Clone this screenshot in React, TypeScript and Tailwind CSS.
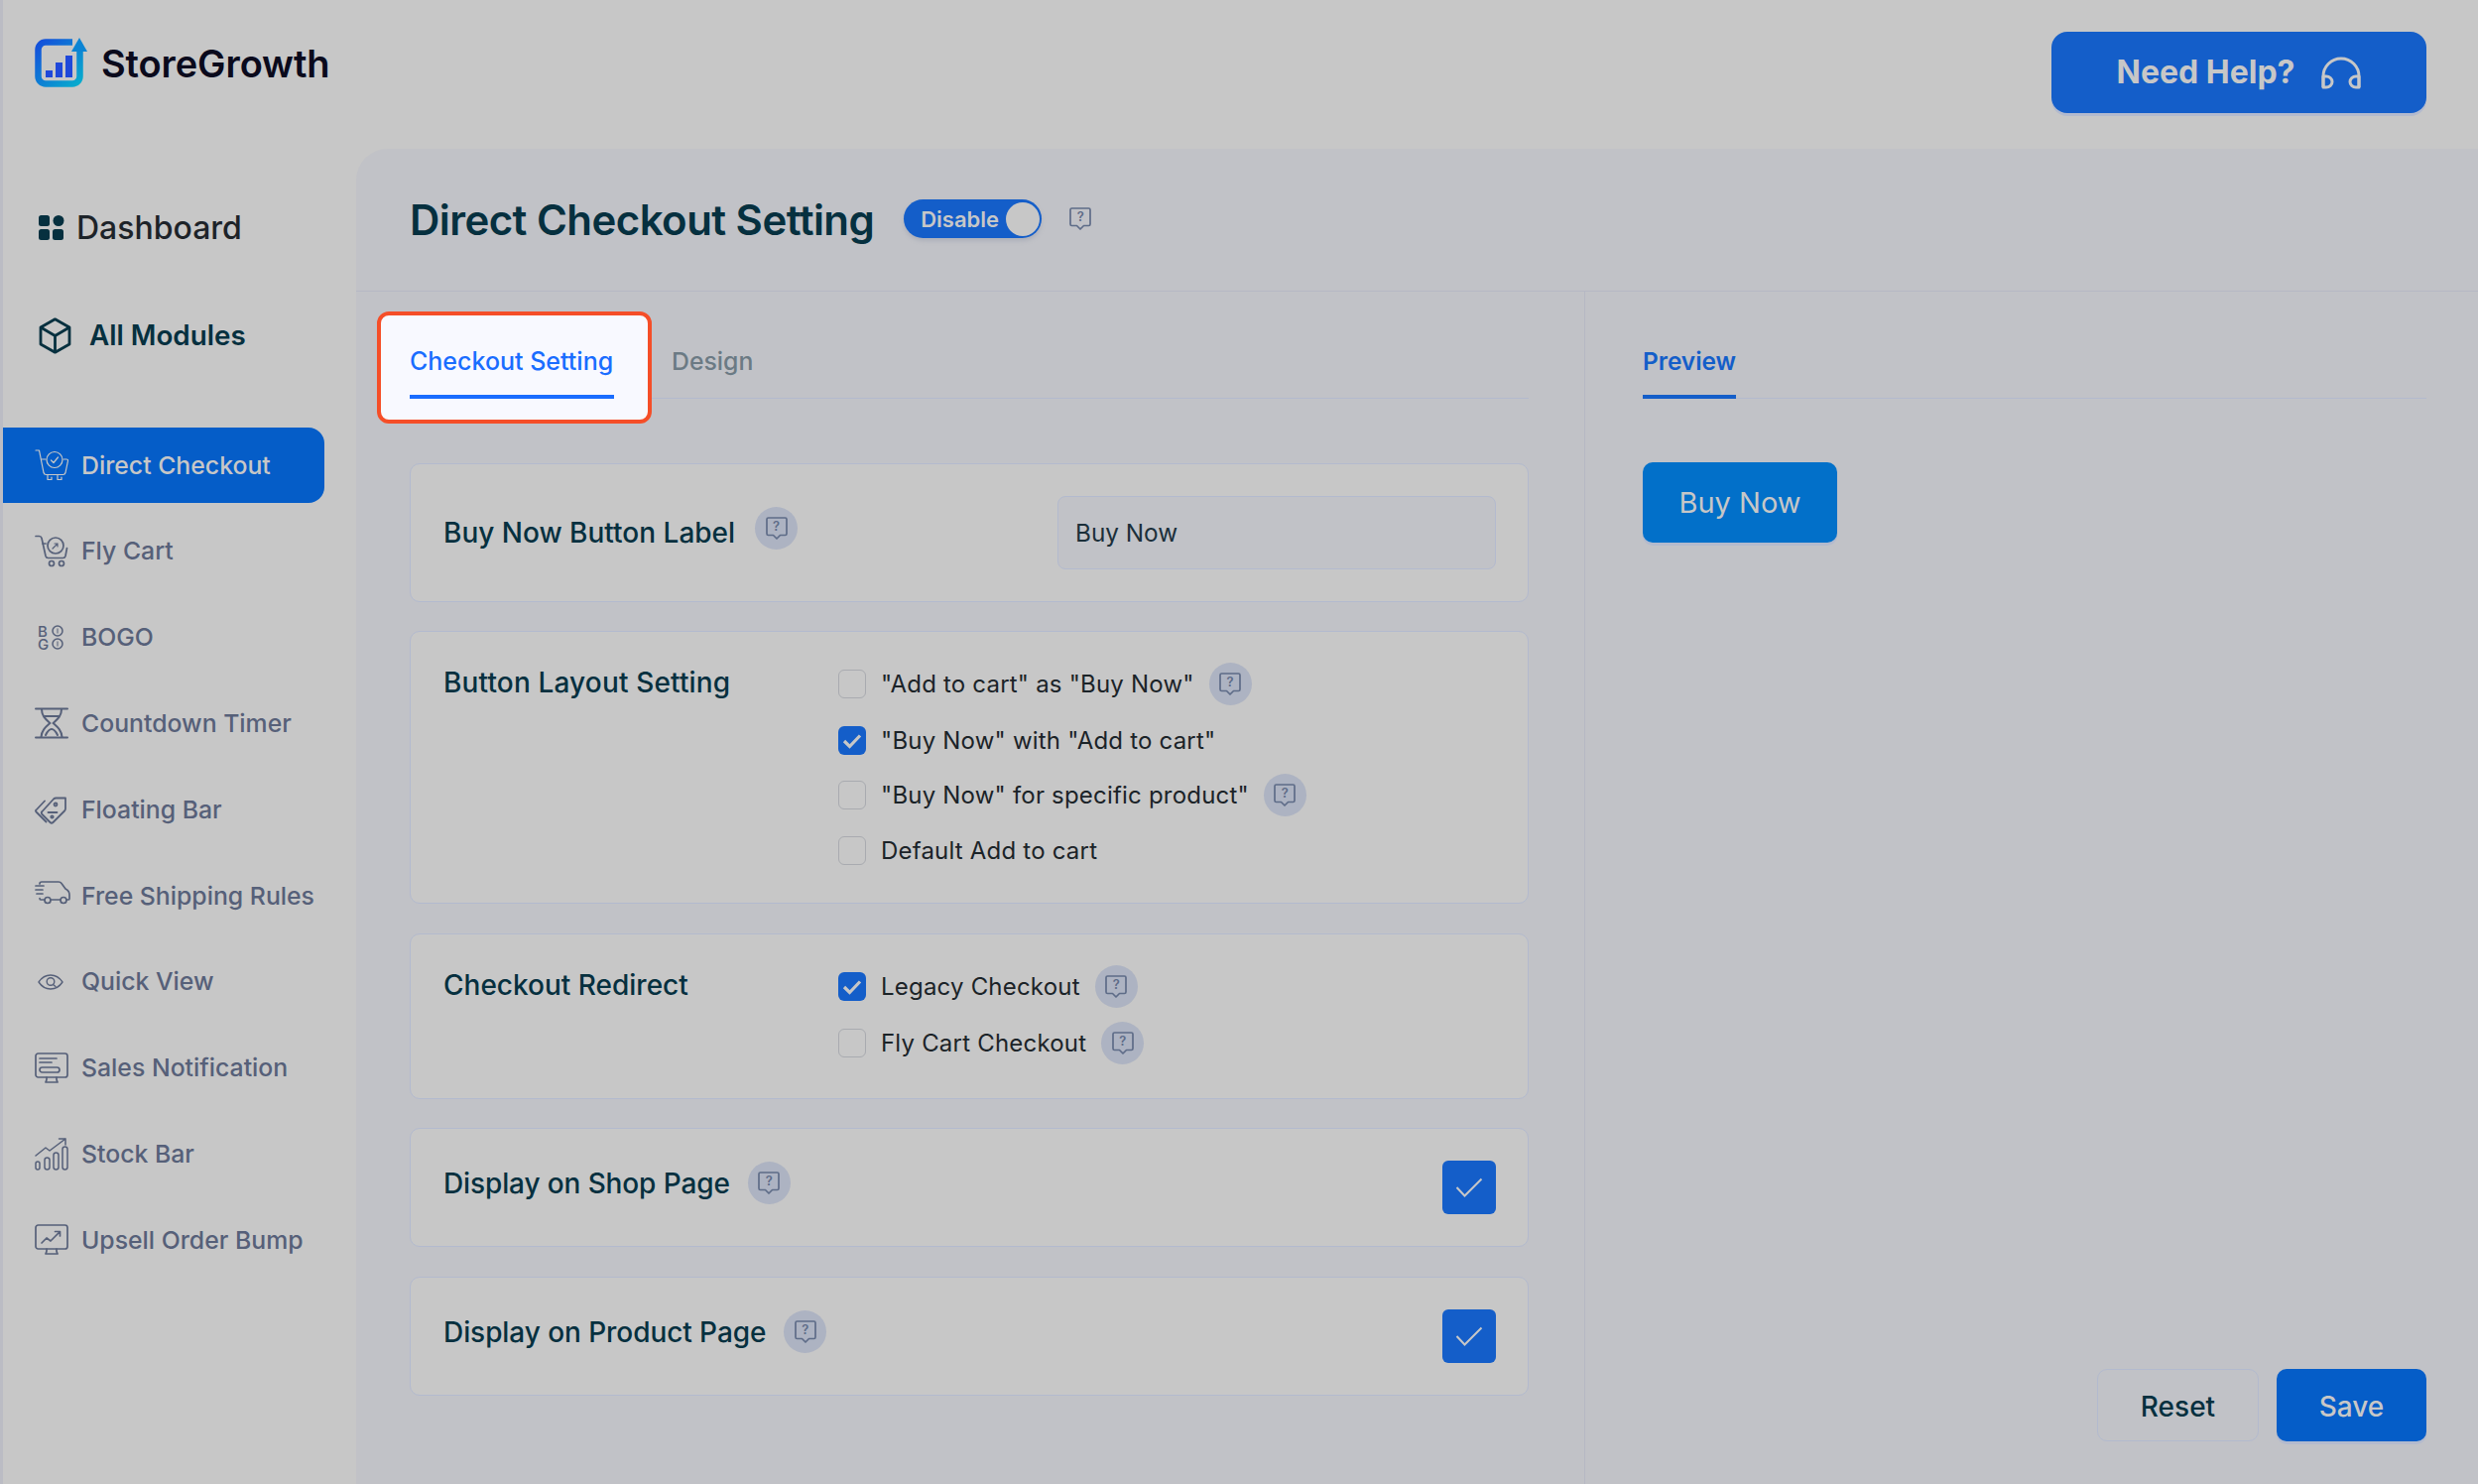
import React from 'react';

const Logo = () => (
  <svg width="53" height="51" viewBox="0 0 53 51" fill="none">
    <defs>
      <linearGradient id="logoGrad" x1="0" y1="0" x2="50" y2="51" gradientUnits="userSpaceOnUse">
        <stop offset="0" stopColor="#1546dc" />
        <stop offset="1" stopColor="#06b6cc" />
      </linearGradient>
    </defs>
    <path d="M38 4.5H11a7.5 7.5 0 0 0-7.5 7.5v27a7.5 7.5 0 0 0 7.5 7.5h27a7.5 7.5 0 0 0 7.5-7.5V12" stroke="url(#logoGrad)" strokeWidth="6.5" />
    <path d="M45 0l8 14H37z" fill="#0b84d4" />
    <rect x="11" y="33" width="7" height="7" fill="#1f48da" />
    <rect x="21" y="25" width="7" height="15" fill="#1f48da" />
    <rect x="31" y="18" width="7" height="22" fill="#1f48da" />
  </svg>
);

const DashboardIcon = () => (
  <svg width="26" height="26" viewBox="0 0 26 26" fill="#06303f">
    <rect x="0" y="0" width="11" height="11" rx="2.5" />
    <circle cx="20" cy="5.5" r="5.5" />
    <rect x="0" y="14" width="11" height="11" rx="2.5" />
    <rect x="14" y="14" width="11" height="11" rx="2.5" />
  </svg>
);

const CubeIcon = () => (
  <svg width="33" height="37" viewBox="0 0 33 37" fill="none" stroke="#06303f" strokeWidth="2.8" strokeLinejoin="round">
    <path d="M16.5 1.8L31 10v17l-14.5 8.2L2 27V10z" />
    <path d="M2 10l14.5 8.5L31 10M16.5 18.5v16.5" />
  </svg>
);

const Svg = ({ children, w = 34, h = 34, sw = 1.6 }: { children: React.ReactNode; w?: number; h?: number; sw?: number }) => (
  <svg width={w} height={h} viewBox={`0 0 ${w} ${h}`} fill="none" stroke="currentColor" strokeWidth={sw} strokeLinecap="round" strokeLinejoin="round">
    {children}
  </svg>
);

const DirectCheckoutIcon = () => (
  <Svg h={32} sw={1.2}>
    <path d="M1 1h3.5l4.5 22.500q.5 2 2.5 2h17q2 0 2.500-2l2.500-12q.3-1.500-1.500-1.500h-3" />
    <path d="M6.500 10h4.500" />
    <circle cx="20" cy="10.5" r="8" />
    <path d="M16.500 11l2.500 2.500 4.500-5.500" />
    <path d="M13 26v4.500h4V28M23 26v4.500h4V28" />
  </Svg>
);

const FlyCartIcon = () => (
  <Svg h={33} sw={1.7}>
    <path d="M1 1.500h3.500q2 0 2.500 2l4 18q.5 2 2.500 2h15q2 0 2.500-2l1.500-8" />
    <path d="M8 9h3" />
    <circle cx="21" cy="11" r="8" />
    <path d="M18 14l5-5M20 9h3v3" strokeWidth="1.2" />
    <circle cx="17" cy="29" r="2.5" />
    <circle cx="27" cy="29" r="2.5" />
  </Svg>
);

const BogoCircle = () => (
  <svg width="12" height="12" viewBox="0 0 12 12" fill="none" stroke="currentColor" strokeWidth="1.5">
    <circle cx="6" cy="6" r="5" />
    <path d="M6 3.500v5" strokeWidth="1" />
  </svg>
);

const BogoIcon = () => (
  <span className="ml-[3px] grid h-[26px] w-[26px] grid-cols-[14px_12px] grid-rows-[13px_13px] items-center text-[15px] font-medium leading-[13px]">
    <span>B</span>
    <BogoCircle />
    <span>G</span>
    <BogoCircle />
  </span>
);

const TimerIcon = () => (
  <Svg h={32} sw={2}>
    <path d="M1 1.500h32M1 30.500h32" />
    <path d="M7 2c0 7 4 10 8.500 14C11 20 7 23 6.500 30M27 2c0 7-4 10-8.500 14C23 20 27 23 27.500 30" />
    <path d="M10 9h14M11 28c2-4 4-6 6-6s4 2 6 6" />
  </Svg>
);

const FloatingIcon = () => (
  <Svg w={33} h={29} sw={1.8}>
    <path d="M31 2.500v10.500q0 1.500-1 2.500L18.500 27q-1.500 1.500-3 0l-8-8q-1.500-1.500 0-3L19 3.500q1-1 2.500-1z" />
    <path d="M10 5.500L1.500 14.500q-1 1 0 2l10 10" />
    <circle cx="21" cy="9" r="1.5" />
    <path d="M13.500 17h9" />
    <circle cx="17.5" cy="21.5" r="1.2" />
  </Svg>
);

const TruckIcon = () => (
  <svg width="36" height="24" viewBox="0 0 36 24" fill="none" stroke="currentColor" strokeWidth="1.7" strokeLinecap="round" strokeLinejoin="round" className="-mt-[6px]">
    <path d="M5 3q0-2 2-2h17q2 0 3 1.500L31 8q4 2 4 6v4q0 1-1.500 1H32M26 19H16M10 19H6q-1 0-1-1.500" />
    <circle cx="13" cy="19.5" r="3" />
    <circle cx="29" cy="19.5" r="3" />
    <path d="M1 5h8M1 9h7M2 13h6" />
  </svg>
);

const EyeIcon = () => (
  <svg width="26" height="16" viewBox="0 0 26 16" fill="none" stroke="currentColor" strokeWidth="1.4" strokeLinecap="round" strokeLinejoin="round" className="ml-[3px]">
    <path d="M1 8c3-4.500 7-7 12-7s9 2.500 12 7c-3 4.500-7 7-12 7S4 12.500 1 8z" />
    <circle cx="13" cy="7.5" r="3.8" />
    <path d="M15.500 10.500l2.500 2" />
  </svg>
);

const MonitorIcon = () => (
  <Svg h={32} sw={1.7}>
    <rect x="1" y="1" width="32" height="24" rx="2.5" />
    <path d="M12 25v2q0 1-1 3h12q-1-2-1-3v-2M5 6h17M5 10h12" />
    <rect x="5" y="15" width="20" height="5" rx="2.5" />
  </Svg>
);

const StockIcon = () => (
  <Svg h={33} sw={1.5}>
    <rect x="1" y="24" width="4" height="8" rx="2" />
    <rect x="10" y="20" width="5" height="12" rx="2.5" />
    <rect x="19" y="15" width="5" height="17" rx="2.5" />
    <rect x="28" y="9" width="5" height="23" rx="2.5" />
    <path d="M1 18L11 10l4 3L31 1M24.500 1H31v6" />
  </Svg>
);

const TrendMonitorIcon = () => (
  <Svg h={32} sw={1.7}>
    <rect x="1" y="1" width="32" height="24" rx="2.5" />
    <path d="M12 25v2q0 1-1 3h12q-1-2-1-3v-2" />
    <path d="M7 19l5-5 4 3 9-9M20.500 7.500H25.500V12" />
  </Svg>
);

const Headset = () => (
  <svg width="40" height="33" viewBox="0 0 40 33" fill="none" stroke="#c7c7c7" strokeWidth="3">
    <path d="M2 31V20a18 18 0 0 1 36 0v11" />
    <path d="M2 20h3a6 5.500 0 0 1 0 11H2zM38 20h-3a6 5.500 0 0 0 0 11h3z" strokeLinejoin="round" />
  </svg>
);

const QuestionBubble = () => (
  <span className="relative flex h-[23px] w-[22px] justify-center text-[13px] font-semibold leading-[18px] text-[#5e6c88]">
    <svg width="22" height="23" viewBox="0 0 22 23" fill="none" stroke="currentColor" strokeWidth="1.7" strokeLinejoin="round" className="absolute inset-0">
      <path d="M2.500 1h17q1.500 0 1.500 1.500V17q0 1.500-1.500 1.500H14.500L11 22l-3.500-3.500H2.500Q1 18.500 1 17V2.500Q1 1 2.500 1z" />
    </svg>
    ?
  </span>
);

const HelpBubble = () => (
  <span className="flex h-[43px] w-[43px] shrink-0 items-center justify-center rounded-full bg-[#adb3c2]">
    <QuestionBubble />
  </span>
);

const Check = () => (
  <svg width="20" height="16" viewBox="0 0 20 16" fill="none" stroke="#c7c7c7" strokeWidth="3.2">
    <path d="M2 8l5.500 5.500L18 2.500" />
  </svg>
);

const CheckBox = ({ checked }: { checked?: boolean }) => (
  <span className={checked ? 'flex h-[29px] w-[28px] shrink-0 items-center justify-center rounded-[6px] bg-[#145ec9]' : 'h-[29px] w-[28px] shrink-0 rounded-[6px] border border-[#a9abb0]'}>
    {checked && <Check />}
  </span>
);

const BigCheck = () => (
  <span className="flex h-[54px] w-[54px] shrink-0 items-center justify-center rounded-[6px] bg-[#145ec9]">
    <svg width="28" height="20" viewBox="0 0 28 20" fill="none" stroke="#c7c7c7" strokeWidth="2">
      <path d="M1.500 10l8 8.500L26.500 1.500" />
    </svg>
  </span>
);

const navItems = [
  { label: 'Direct Checkout', icon: <DirectCheckoutIcon />, active: true },
  { label: 'Fly Cart', icon: <FlyCartIcon /> },
  { label: 'BOGO', icon: <BogoIcon /> },
  { label: 'Countdown Timer', icon: <TimerIcon /> },
  { label: 'Floating Bar', icon: <FloatingIcon /> },
  { label: 'Free Shipping Rules', icon: <TruckIcon /> },
  { label: 'Quick View', icon: <EyeIcon /> },
  { label: 'Sales Notification', icon: <MonitorIcon /> },
  { label: 'Stock Bar', icon: <StockIcon /> },
  { label: 'Upsell Order Bump', icon: <TrendMonitorIcon /> },
];

const Option = ({ label, checked, help, className = '' }: { label: string; checked?: boolean; help?: boolean; className?: string }) => (
  <div className={`flex h-[43px] items-center ${className}`}>
    <CheckBox checked={checked} />
    <span className="ml-[15px] text-[24px] leading-none tracking-[0.2px] text-[#1b2328]">{label}</span>
    {help && <span className="ml-[15px]"><HelpBubble /></span>}
  </div>
);

const cardClass = 'rounded-[10px] border-[1.5px] border-[#b3bace] bg-[#c7c7c7]';
const labelClass = 'text-[28px] font-medium leading-none text-[#06303f]';

export default function App() {
  return (
    <div className="flex h-[1496px] w-full flex-col overflow-hidden border-l-[3px] border-[#bbbcc4] bg-[#c7c7c7] [font-family:Inter,sans-serif]">
      <header className="flex h-[150px] shrink-0 items-start justify-between">
        <div className="ml-[32px] mt-[38px] flex items-center">
          <Logo />
          <span className="ml-[14px] text-[38px] font-semibold leading-none tracking-[-0.1px] text-[#0a0a1c]">StoreGrowth</span>
        </div>
        <button className="mr-[52px] mt-[32px] flex h-[82px] w-[378px] items-center justify-center gap-[27px] rounded-[16px] bg-[#145ec9] text-[32px] font-bold text-[#c7c7c7] shadow-[0_3px_0_#b3bace]">
          Need Help?
          <Headset />
        </button>
      </header>

      <div className="flex min-h-0 flex-1">
        <aside className="w-[356px] shrink-0">
          <div className="ml-[36px] mt-[67px] flex h-[26px] items-center">
            <DashboardIcon />
            <span className="ml-[12px] text-[32px] font-medium leading-none text-[#1d2329]">Dashboard</span>
          </div>
          <div className="ml-[36px] mt-[77px] flex h-[37px] items-center">
            <CubeIcon />
            <span className="ml-[18px] text-[27.8px] font-semibold leading-none text-[#06303f]">All Modules</span>
          </div>
          <nav className="mt-[74px] flex flex-col gap-[10.8px]">
            {navItems.map((item) => (
              <div
                key={item.label}
                className={
                  item.active
                    ? 'flex h-[76px] w-[324px] items-center rounded-r-[16px] bg-[#055dc8] text-[#c7c7c7]'
                    : 'flex h-[76px] w-[324px] items-center text-[#566079]'
                }
              >
                <span className="ml-[32px] flex w-[47px] shrink-0 items-center">{item.icon}</span>
                <span className="text-[24.8px] font-medium leading-none">{item.label}</span>
              </div>
            ))}
          </nav>
        </aside>

        <main className="flex min-w-0 flex-1 flex-col rounded-tl-[32px] bg-[#c1c2c7]">
          <div className="flex h-[144px] shrink-0 items-center border-b-[1.5px] border-[#b6b8c4] pl-[54px]">
            <h1 className="text-[42px] font-semibold leading-none tracking-[-0.55px] text-[#06303f]">Direct Checkout Setting</h1>
            <div className="-mt-[2px] ml-[30px] flex h-[39px] w-[139px] items-center justify-between rounded-full bg-[#145ec9] pl-[17px] pr-[2px] shadow-[0_3px_4px_#adb0ba]">
              <span className="text-[22px] font-semibold leading-none text-[#c7c7c7]">Disable</span>
              <span className="h-[34px] w-[34px] rounded-full bg-[#c7c7c7]" />
            </div>
            <span className="-mt-[2px] ml-[28px]"><QuestionBubble /></span>
          </div>

          <div className="flex min-h-0 flex-1">
            <section className="w-[1239px] shrink-0 border-r-[1.5px] border-[#b6b8c4] pl-[54px] pr-[56px]">
              <div className="mt-[33px] flex h-[75px] border-b-[1.5px] border-[#b3bace]">
                <div className="relative h-[75px] w-[206px]">
                  <div className="absolute -left-[33px] -top-[13px] h-[113px] w-[277px] rounded-[12px] border-[4px] border-[#f54e28] bg-[#f8f9ff]" />
                  <div className="absolute left-0 top-[25px] whitespace-nowrap text-[25px] font-medium leading-none text-[#1a6dff]">Checkout Setting</div>
                  <div className="absolute bottom-0 left-0 h-[4px] w-full bg-[#1a6dff]" />
                </div>
                <div className="ml-[58px] mt-[25px] text-[24.8px] font-medium leading-none text-[#6b7a84]">Design</div>
              </div>

              <div className="mt-[65px] flex flex-col">
                <div className={`${cardClass} flex h-[140px] items-center pl-[33px] pr-[32px]`}>
                  <span className={labelClass}>Buy Now Button Label</span>
                  <span className="-mt-[10px] ml-[20px]"><HelpBubble /></span>
                  <div className="ml-auto flex h-[74px] w-[442px] items-center rounded-[8px] border-[1.5px] border-[#b3bace] bg-[#c1c2c7] pl-[17px] text-[24.3px] text-[#1b2f3a]">Buy Now</div>
                </div>

                <div className={`${cardClass} mt-[29px] flex h-[275px] pl-[33px]`}>
                  <span className={`${labelClass} mt-[37px] w-[398px] shrink-0 tracking-[0.15px]`}>Button Layout Setting</span>
                  <div className="mt-[31px] flex flex-col">
                    <Option label={'"Add to cart" as "Buy Now"'} help />
                    <Option label={'"Buy Now" with "Add to cart"'} checked className="mt-[14px]" />
                    <Option label={'"Buy Now" for specific product"'} help className="mt-[12px]" />
                    <Option label="Default Add to cart" className="mt-[13px]" />
                  </div>
                </div>

                <div className={`${cardClass} mt-[30px] flex h-[167px] pl-[33px]`}>
                  <span className={`${labelClass} mt-[37px] w-[398px] shrink-0`}>Checkout Redirect</span>
                  <div className="mt-[31px] flex flex-col gap-[14px]">
                    <Option label="Legacy Checkout" checked help />
                    <Option label="Fly Cart Checkout" help />
                  </div>
                </div>

                <div className={`${cardClass} mt-[29px] flex h-[120px] items-center pl-[33px] pr-[32px]`}>
                  <span className={`${labelClass} -mt-[8px] tracking-[-0.12px]`}>Display on Shop Page</span>
                  <span className="-mt-[10px] ml-[18px]"><HelpBubble /></span>
                  <span className="ml-auto"><BigCheck /></span>
                </div>

                <div className={`${cardClass} mt-[30px] flex h-[120px] items-center pl-[33px] pr-[32px]`}>
                  <span className={`${labelClass} -mt-[8px] tracking-[-0.07px]`}>Display on Product Page</span>
                  <span className="-mt-[10px] ml-[18px]"><HelpBubble /></span>
                  <span className="ml-auto"><BigCheck /></span>
                </div>
              </div>
            </section>

            <section className="flex min-w-0 flex-1 flex-col pl-[58px] pr-[52px]">
              <div className="mt-[33px] flex h-[75px] border-b-[1.5px] border-[#b3bace]">
                <div className="h-[75px] border-b-[4px] border-[#145ec9] pt-[25px] text-[24.4px] font-semibold leading-none text-[#145ec9]">Preview</div>
              </div>
              <button className="mt-[64px] flex h-[81px] w-[196px] items-center justify-center rounded-[10px] bg-[#0270c9] text-[29px] text-[#c7c7c7] shadow-[0_3px_0_#b3bace]">Buy Now</button>
              <div className="mt-[833px] flex justify-end gap-[18px]">
                <button className="flex h-[73px] w-[163px] items-center justify-center rounded-[10px] border-[1.5px] border-[#b3bace] pt-[2px] text-[28px] font-medium text-[#06303f]">Reset</button>
                <button className="flex h-[73px] w-[151px] items-center justify-center rounded-[10px] bg-[#055dc8] pt-[2px] text-[28px] font-medium text-[#c7c7c7] shadow-[0_3px_0_#b3bace]">Save</button>
              </div>
            </section>
          </div>
        </main>
      </div>
    </div>
  );
}
